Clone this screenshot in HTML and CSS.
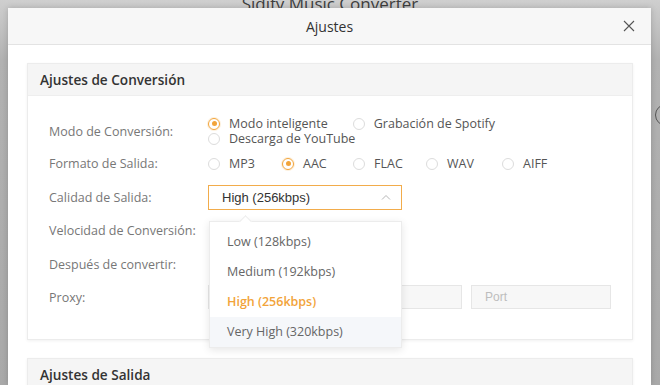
FILE: index.html
```
<!DOCTYPE html>
<html lang="es">
<head>
    <meta charset="UTF-8">
    <title>Ajustes</title>
    <link rel="stylesheet" href="styles.css">
</head>
<body>
    <div class="app-title"><span>Sidify Music Converter</span></div>
    <div class="side-button"></div>
    <div class="dialog">
        <div class="dialog-header">
            <span class="dialog-title">Ajustes</span>
            <svg class="close" width="12" height="12" viewBox="0 0 12 12">
                <path d="M1 1L11 11M11 1L1 11" stroke="#555" stroke-width="1.1" fill="none"/>
            </svg>
        </div>
        <div class="dialog-body">
            <div class="card">
                <div class="card-header">Ajustes de Conversión</div>
                <div class="card-body">
                    <div class="row row-mode">
                        <div class="label">Modo de Conversión:</div>
                        <div class="radios mode-radios">
                            <span class="radio checked"><i></i>Modo inteligente</span>
                            <span class="radio"><i></i>Grabación de Spotify</span>
                            <span class="radio"><i></i>Descarga de YouTube</span>
                        </div>
                    </div>
                    <div class="row">
                        <div class="label">Formato de Salida:</div>
                        <div class="radios format-radios">
                            <span class="radio"><i></i>MP3</span>
                            <span class="radio checked"><i></i>AAC</span>
                            <span class="radio"><i></i>FLAC</span>
                            <span class="radio"><i></i>WAV</span>
                            <span class="radio"><i></i>AIFF</span>
                        </div>
                    </div>
                    <div class="row row-quality">
                        <div class="label">Calidad de Salida:</div>
                        <div class="select-wrap">
                            <div class="select">
                                <span>High (256kbps)</span>
                                <svg width="10" height="6" viewBox="0 0 10 6">
                                    <path d="M1 5.5L5 1.5L9 5.5" stroke="#b5b5b5" stroke-width="1" fill="none"/>
                                </svg>
                            </div>
                            <div class="dropdown">
                                <div class="option">Low (128kbps)</div>
                                <div class="option">Medium (192kbps)</div>
                                <div class="option selected">High (256kbps)</div>
                                <div class="option hover">Very High (320kbps)</div>
                            </div>
                        </div>
                    </div>
                    <div class="row">
                        <div class="label">Velocidad de Conversión:</div>
                    </div>
                    <div class="row row-after">
                        <div class="label">Después de convertir:</div>
                    </div>
                    <div class="row row-proxy">
                        <div class="label">Proxy:</div>
                        <div class="proxy">
                            <div class="input host"></div>
                            <div class="input port">Port</div>
                        </div>
                    </div>
                </div>
            </div>
            <div class="card">
                <div class="card-header">Ajustes de Salida</div>
            </div>
        </div>
    </div>
</body>
</html>
```

FILE: styles.css
```
body {
    margin: 0;
    height: 385px;
    overflow: hidden;
    background: linear-gradient(to bottom, #cfcfcf 0, #b2b2b2 60px, #a9a9a9 100%);
    font-family: 'Open Sans', sans-serif;
    position: relative;
}
.app-title {
    height: 8px;
    overflow: hidden;
    text-align: center;
    font-size: 17px;
    color: #3e3e3e;
}
.app-title span {
    display: block;
    line-height: 14px;
    margin-top: -3px;
}
.side-button {
    position: absolute;
    left: 655px;
    top: 104px;
    width: 20px;
    height: 20px;
    border: 1.5px solid #555;
    border-radius: 50%;
}
.dialog {
    margin-left: 8px;
    width: 643px;
    height: 377px;
    background: #fff;
    box-shadow: 0 0 6px rgba(0, 0, 0, 0.18);
    position: relative;
}
.dialog-header {
    height: 36px;
    background: #f7f7f7;
    border-bottom: 1px solid #e3e3e3;
    display: flex;
    align-items: center;
    justify-content: center;
    position: relative;
}
.dialog-title {
    font-size: 14px;
    color: #333;
}
.close {
    position: absolute;
    right: 16px;
    top: 12px;
}
.dialog-body {
    padding: 18px 18px 0 19px;
}
.card {
    border: 1px solid #ececec;
    box-shadow: 0 1px 3px rgba(0, 0, 0, 0.06);
    background: #fff;
    margin-bottom: 18px;
}
.card-header {
    height: 31px;
    line-height: 31px;
    background: #f5f5f5;
    border-bottom: 1px solid #eeeeee;
    padding-left: 12px;
    font-size: 13.6px;
    font-weight: 600;
    color: #333;
}
.card-body {
    padding: 19px 0 26px 21px;
}
.row {
    display: flex;
    align-items: center;
    height: 33px;
}
.row-mode {
    height: 32px;
}
.row-quality,
.row-after {
    height: 34px;
}
.row-proxy {
    height: 32px;
}
.label {
    width: 159px;
    flex-shrink: 0;
    font-size: 12.5px;
    color: #777;
}
.radios {
    display: flex;
    flex-wrap: wrap;
    font-size: 12.5px;
    color: #555;
    line-height: 15px;
}
.mode-radios {
    column-gap: 25px;
    width: 400px;
}
.format-radios .radio {
    width: 74px;
}
.format-radios .radio:nth-child(2) {
    width: 71px;
}
.format-radios .radio:nth-child(3) {
    width: 73px;
}
.format-radios .radio:nth-child(4) {
    width: 76px;
}
.radio {
    display: flex;
    align-items: center;
}
.radio i {
    width: 10px;
    height: 10px;
    border: 1px solid #dcdcdc;
    border-radius: 50%;
    margin-right: 9px;
    box-sizing: content-box;
    position: relative;
}
.radio.checked i {
    border-color: #f2a43a;
    box-shadow: 0 0 0 1px #fdf0dc;
}
.radio.checked i::after {
    content: '';
    position: absolute;
    left: 2.5px;
    top: 2.5px;
    width: 5px;
    height: 5px;
    border-radius: 50%;
    background: #f2a43a;
}
.select-wrap {
    position: relative;
}
.select {
    width: 194px;
    height: 25px;
    box-sizing: border-box;
    border: 1px solid #f2ac4b;
    display: flex;
    align-items: center;
    justify-content: space-between;
    padding: 0 10px 0 13px;
    font-family: 'Liberation Sans', Arial, sans-serif;
    font-size: 13px;
    color: #333;
}
.dropdown {
    position: absolute;
    left: 1px;
    top: 36px;
    width: 193px;
    padding-top: 5px;
    background: #fff;
    border: 1px solid #ececec;
    box-sizing: border-box;
    box-shadow: 0 2px 8px rgba(0, 0, 0, 0.1);
    z-index: 2;
}
.dropdown::before {
    content: '';
    position: absolute;
    left: 31px;
    top: -5px;
    width: 8px;
    height: 8px;
    background: #fff;
    border-left: 1px solid #ececec;
    border-top: 1px solid #ececec;
    transform: rotate(45deg);
}
.option {
    height: 30px;
    line-height: 30px;
    padding-left: 17px;
    font-size: 12.5px;
    color: #666;
}
.option.selected {
    color: #f2a43a;
    font-weight: 600;
}
.option.hover {
    background: #f5f7fa;
}
.proxy {
    display: flex;
    gap: 9px;
}
.input {
    height: 24px;
    box-sizing: border-box;
    background: #f7f7f7;
    border: 1px solid #e6e6e6;
    font-family: 'Liberation Sans', Arial, sans-serif;
    font-size: 12px;
    color: #bdbdbd;
    line-height: 22px;
    padding-left: 13px;
}
.host {
    width: 254px;
}
.port {
    width: 140px;
}
```
